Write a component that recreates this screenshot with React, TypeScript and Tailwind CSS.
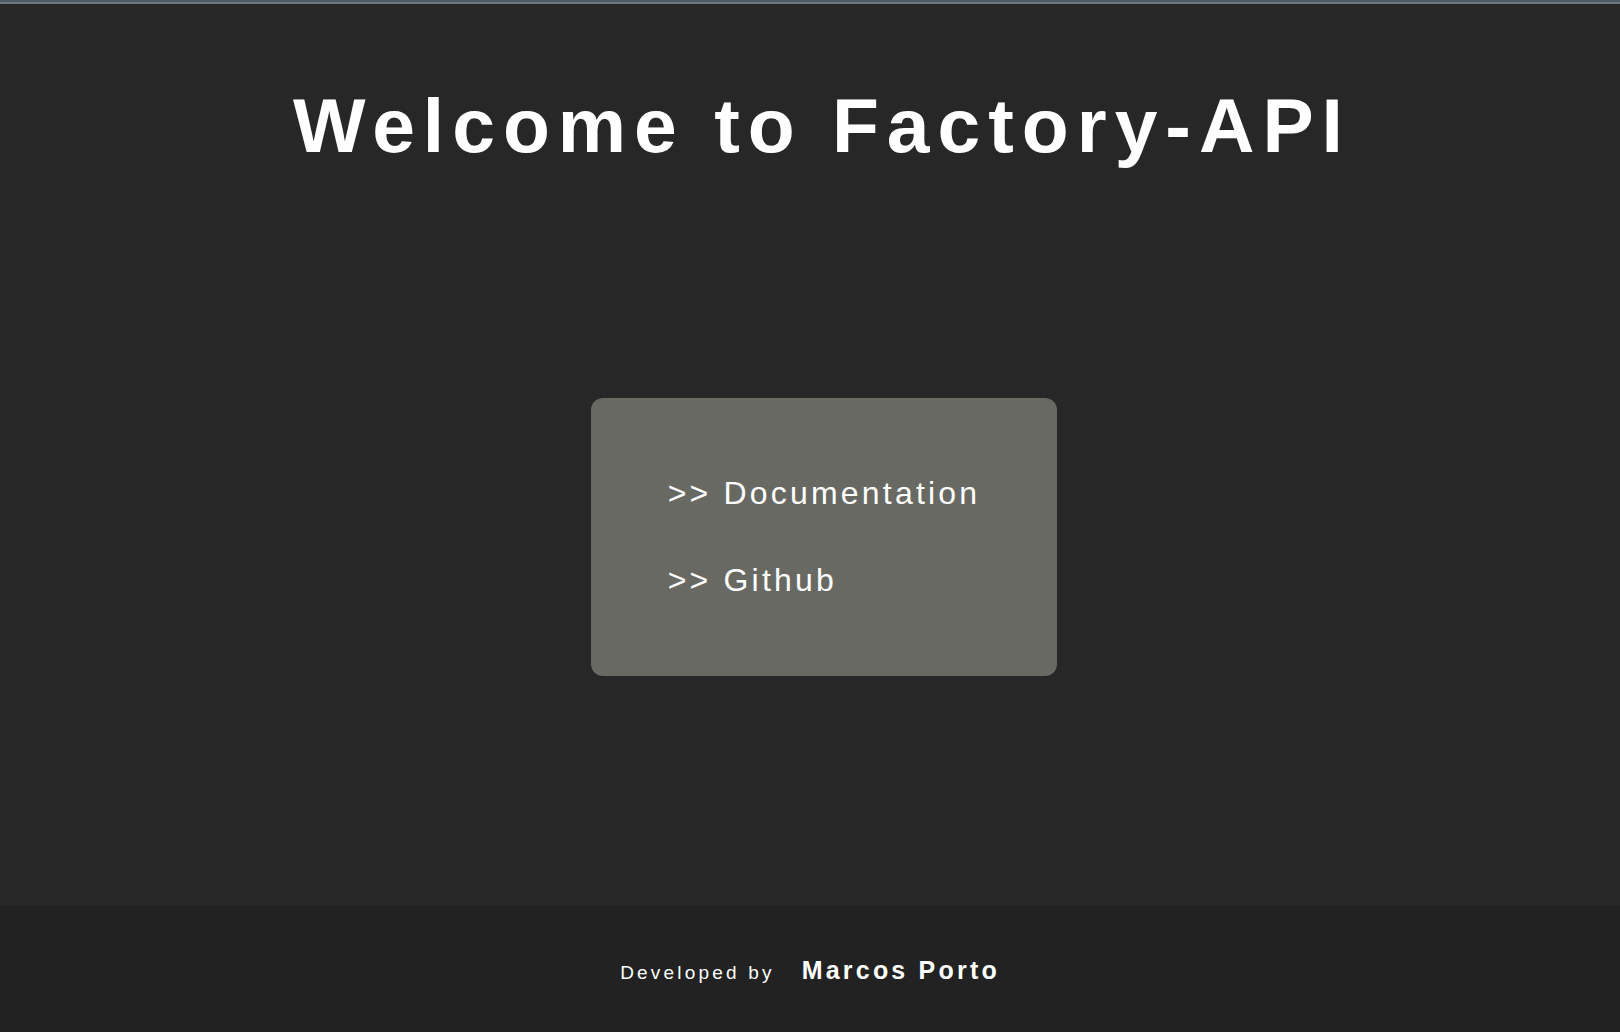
import React from "react";

export default function App() {
  return (
    <div className="min-h-screen flex flex-col bg-[#282728] font-['Liberation_Sans',Arial,Helvetica,sans-serif] text-white">
      <div className="h-[2px] bg-[#4f5b64]" />
      <div className="h-[2px] bg-[#6b7882]" />
      <main className="h-[901px] flex flex-col items-center pl-[28px]">
        <h1 className="mt-[77px] text-[76.8px] font-bold leading-[1.15] tracking-[8px] whitespace-nowrap -translate-x-[2px]">
          Welcome to Factory-API
        </h1>
        <div className="flex-1 flex items-center">
          <nav className="bg-[#696964] rounded-[12px] p-[77px] flex flex-col gap-[50px]">
            <a href="#" className="text-[32px] leading-[1.15] tracking-[0.1em] whitespace-nowrap">
              &gt;&gt; Documentation
            </a>
            <a href="#" className="text-[32px] leading-[1.15] tracking-[0.1em] whitespace-nowrap">
              &gt;&gt; Github
            </a>
          </nav>
        </div>
      </main>
      <footer className="h-[127px] bg-[#222222] flex items-baseline justify-center pt-[51px]">
        <span className="text-[19px] leading-[1.15] tracking-[3.2px]">Developed by</span>
        <span className="ml-[27px] text-[25px] font-bold leading-[1.15] tracking-[3.2px]">Marcos Porto</span>
      </footer>
    </div>
  );
}
